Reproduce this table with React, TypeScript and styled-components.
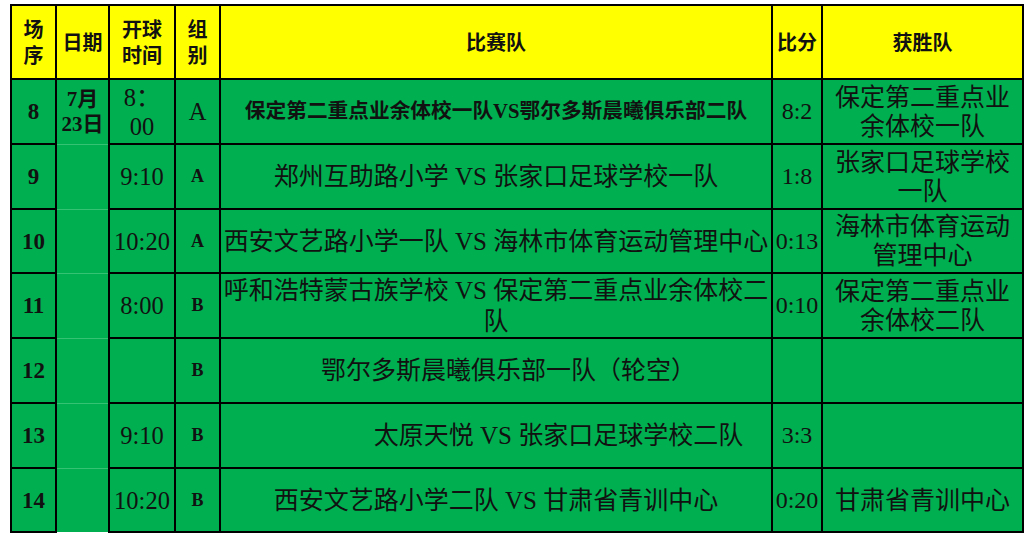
import React from "react"
import styled, { createGlobalStyle } from "styled-components"

interface Match {
  no: string
  date?: string[]
  time: string[]
  group: string
  groupPlain?: boolean
  teams: string
  teamsBold?: boolean
  score: string
  winner: string
}

const matches: Match[] = [
  {
    no: "8",
    date: ["7月", "23日"],
    time: ["8：", "00"],
    group: "A",
    groupPlain: true,
    teams: "保定第二重点业余体校一队VS鄂尔多斯晨曦俱乐部二队",
    teamsBold: true,
    score: "8:2",
    winner: "保定第二重点业余体校一队",
  },
  {
    no: "9",
    time: ["9:10"],
    group: "A",
    teams: "郑州互助路小学 VS 张家口足球学校一队",
    score: "1:8",
    winner: "张家口足球学校一队",
  },
  {
    no: "10",
    time: ["10:20"],
    group: "A",
    teams: "西安文艺路小学一队 VS 海林市体育运动管理中心",
    score: "0:13",
    winner: "海林市体育运动管理中心",
  },
  {
    no: "11",
    time: ["8:00"],
    group: "B",
    teams: "呼和浩特蒙古族学校 VS 保定第二重点业余体校二队",
    score: "0:10",
    winner: "保定第二重点业余体校二队",
  },
  {
    no: "12",
    time: [],
    group: "B",
    teams: "\u3000鄂尔多斯晨曦俱乐部一队（轮空）",
    score: "",
    winner: "",
  },
  {
    no: "13",
    time: ["9:10"],
    group: "B",
    teams: "\u3000\u3000\u3000\u3000\u3000太原天悦 VS 张家口足球学校二队",
    score: "3:3",
    winner: "",
  },
  {
    no: "14",
    time: ["10:20"],
    group: "B",
    teams: "西安文艺路小学二队 VS 甘肃省青训中心",
    score: "0:20",
    winner: "甘肃省青训中心",
  },
]

const widths = [45, 53, 66, 45, 552, 50, 201]
const rowHeights = [65, 65, 64, 65, 65, 65, 64]

const GlobalStyle = createGlobalStyle`
  html, body {
    margin: 0;
    padding: 0;
    background: #ffffff;
  }
  body {
    font-family: "Liberation Serif", "Noto Sans CJK SC", serif;
    color: #111;
  }
`

const Page = styled.div`
  padding: 4px 0 0 10px;
`

const Table = styled.table`
  border-collapse: collapse;
  table-layout: fixed;
  width: 1014px;
`

const HeaderRow = styled.tr`
  height: 74px;
`

const Row = styled.tr<{ $h: number }>`
  height: ${(p) => p.$h}px;
`

const HeaderCell = styled.th`
  background: #ffff00;
  border: 2px solid #000;
  padding: 0;
  font-family: "Noto Sans CJK SC", sans-serif;
  font-weight: 700;
  font-size: 20px;
  line-height: 26px;
  text-align: center;
  vertical-align: middle;
`

const Cell = styled.td`
  background: #00af50;
  border: 2px solid #000;
  padding: 0;
  text-align: center;
  vertical-align: middle;
  font-size: 24.5px;
  line-height: 29px;
`

const NoCell = styled(Cell)`
  font-weight: 700;
  font-size: 23px;
`

const DateCell = styled(Cell)<{ $last: boolean }>`
  border-top: 1px solid #35c273;
  border-bottom: ${(p) => (p.$last ? "none" : "1px solid #35c273")};
  font-weight: 700;
  font-size: 21px;
  line-height: 25px;
`

const GroupCell = styled(Cell)<{ $plain?: boolean }>`
  font-weight: ${(p) => (p.$plain ? 400 : 700)};
  font-size: ${(p) => (p.$plain ? "24.5px" : "18px")};
`

const TeamsCell = styled(Cell)<{ $bold?: boolean }>`
  font-size: ${(p) => (p.$bold ? "20.7px" : "25px")};
  font-weight: ${(p) => (p.$bold ? 700 : 400)};
  line-height: 31px;
`

const ScoreCell = styled(Cell)`
  font-size: 24px;
`

const WinnerCell = styled(Cell)`
  font-size: 25px;
  padding: 0 4px;
`

const Line = styled.div`
  white-space: nowrap;
`

const lines = (parts: string[]) =>
  parts.map((p, i) => <Line key={i}>{p}</Line>)

export default function App() {
  return (
    <Page>
      <GlobalStyle />
      <Table>
        <colgroup>
          {widths.map((w, i) => (
            <col key={i} style={{ width: w }} />
          ))}
        </colgroup>
        <thead>
          <HeaderRow>
            <HeaderCell>{lines(["场", "序"])}</HeaderCell>
            <HeaderCell>日期</HeaderCell>
            <HeaderCell>{lines(["开球", "时间"])}</HeaderCell>
            <HeaderCell>{lines(["组", "别"])}</HeaderCell>
            <HeaderCell>比赛队</HeaderCell>
            <HeaderCell>比分</HeaderCell>
            <HeaderCell>获胜队</HeaderCell>
          </HeaderRow>
        </thead>
        <tbody>
          {matches.map((m, i) => (
            <Row key={m.no} $h={rowHeights[i]}>
              <NoCell>{m.no}</NoCell>
              <DateCell $last={i === matches.length - 1}>
                {m.date && lines(m.date)}
              </DateCell>
              <Cell>{lines(m.time)}</Cell>
              <GroupCell $plain={m.groupPlain}>{m.group}</GroupCell>
              <TeamsCell $bold={m.teamsBold}>{m.teams}</TeamsCell>
              <ScoreCell>{m.score}</ScoreCell>
              <WinnerCell>{m.winner}</WinnerCell>
            </Row>
          ))}
        </tbody>
      </Table>
    </Page>
  )
}
